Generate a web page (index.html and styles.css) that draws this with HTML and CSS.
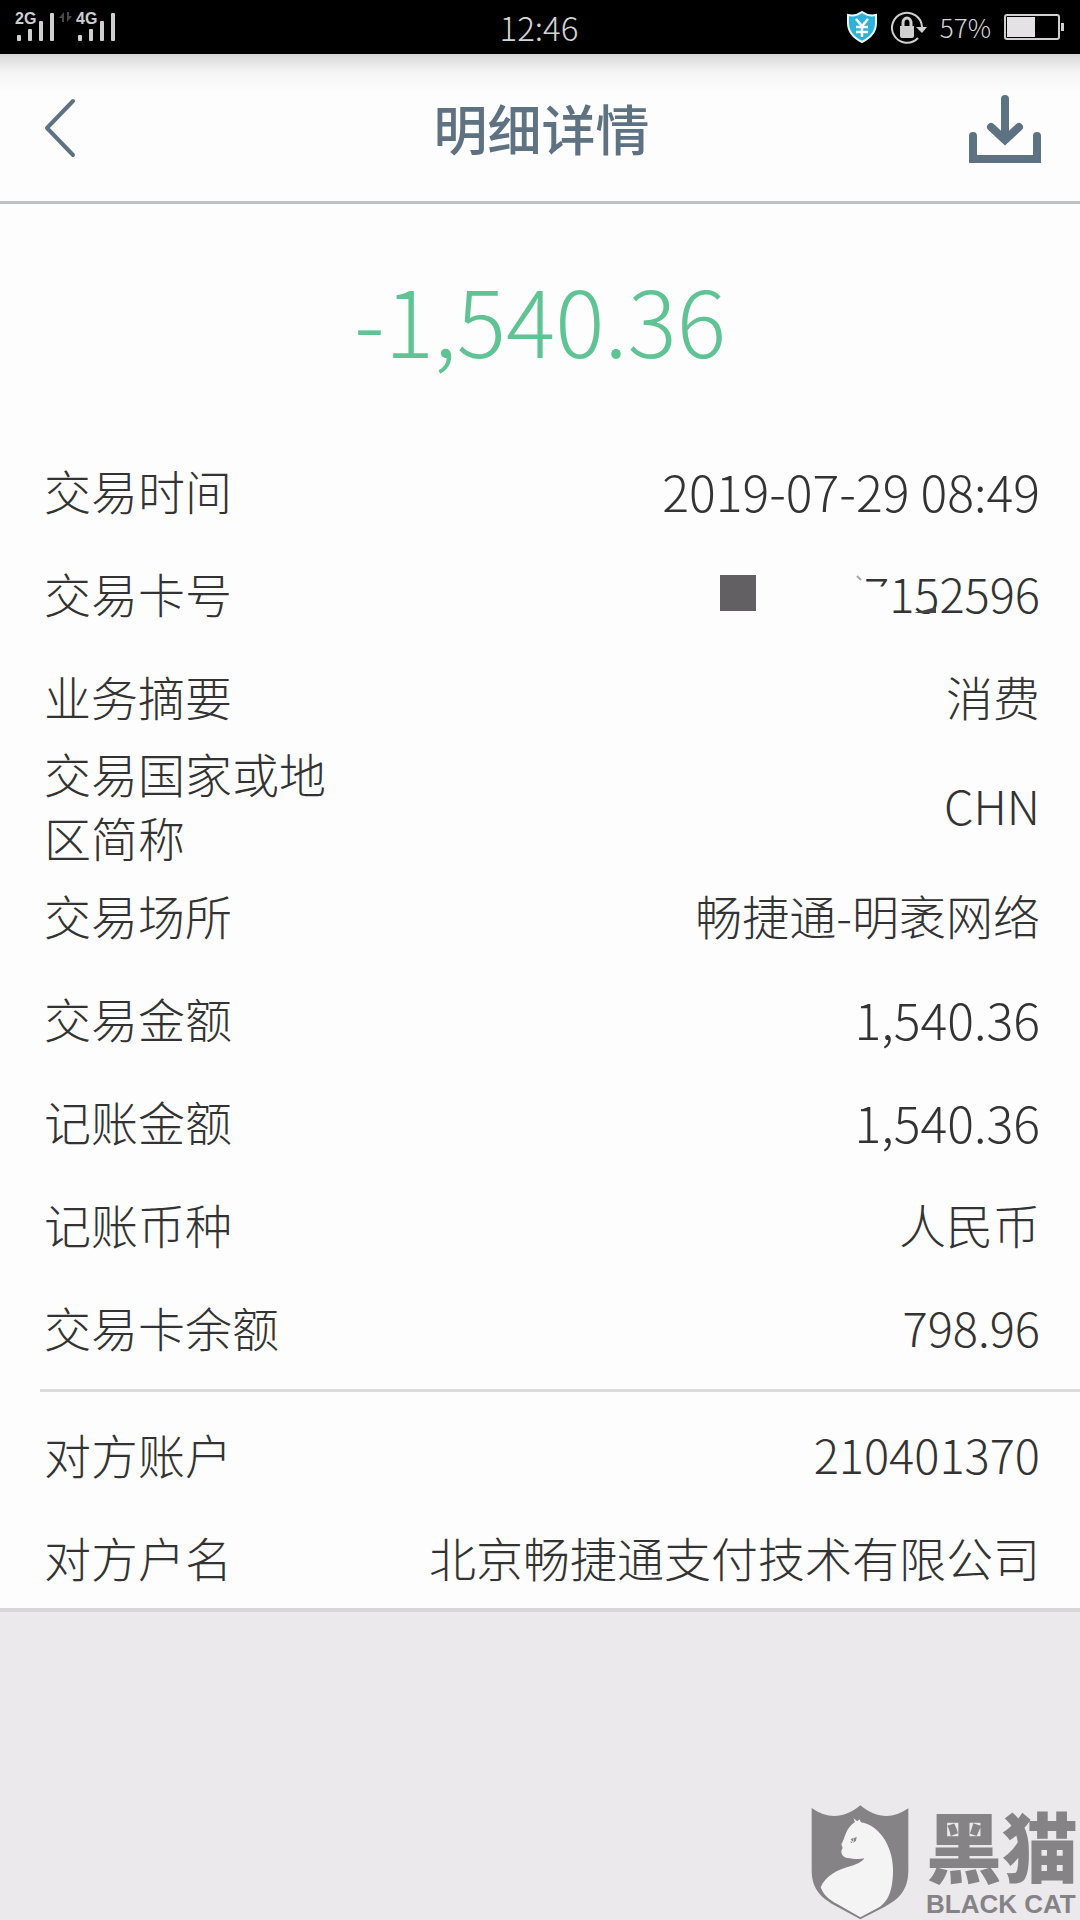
FILE: index.html
```html
<!DOCTYPE html>
<html lang="zh-CN">
<head>
<meta charset="utf-8">
<meta name="viewport" content="width=device-width, initial-scale=1">
<title>明细详情</title>
<link rel="stylesheet" href="styles.css">
</head>
<body>
<div class="status">
  <svg class="signal" width="104" height="32" viewBox="14 11 104 32" role="img" aria-label="2G 4G">
    <g fill="#cfcfcf">
      <text x="15" y="24">2G</text>
      <text x="76" y="24">4G</text>
      <rect x="17" y="35" width="4" height="6" rx="1"/><rect x="28" y="29" width="4" height="12" rx="1"/><rect x="39" y="21" width="4" height="20" rx="1"/><rect x="50" y="13" width="4" height="28" rx="1"/>
      <rect x="78" y="35" width="4" height="6" rx="1"/><rect x="89" y="29" width="4" height="12" rx="1"/><rect x="100" y="21" width="4" height="20" rx="1"/><rect x="111" y="13" width="4" height="28" rx="1"/>
    </g>
    <path fill="#484848" d="M64 12v10h-2v-4h-3zM67 12v10l5-6h-3v-4z"/>
  </svg>
  <time class="clock">12:46</time>
  <div class="status-right">
    <svg width="32" height="34" viewBox="0 0 32 34" aria-hidden="true">
      <path fill="#2fb2d8" stroke="#e6f8fc" stroke-width="2" d="M16 2c4 3 9 4 14 3v8c0 9-6 15-14 19C8 28 2 22 2 13V5c5 1 10 0 14-3z"/>
      <path fill="none" stroke="#fff" stroke-width="2.5" d="M10 9l6 7 6-7M10 17h12M10 22h12M16 16v11"/>
    </svg>
    <svg width="36" height="34" viewBox="0 0 36 34" aria-hidden="true">
      <path fill="none" stroke="#cfcfcf" stroke-width="2" d="M27 28A15 15 0 1 1 31 17"/>
      <path fill="#cfcfcf" d="M25 17h11l-5 6zM9 16h14v10a2 2 0 0 1-2 2H11a2 2 0 0 1-2-2z"/>
      <path fill="none" stroke="#cfcfcf" stroke-width="3" d="M12 17v-4a4 5 0 0 1 8 0v4"/>
    </svg>
    <span class="percent">57%</span>
    <svg width="60" height="26" viewBox="0 0 60 26" aria-hidden="true">
      <rect x="1" y="1" width="54" height="24" rx="2" fill="none" stroke="#cfcfcf" stroke-width="2"/>
      <rect x="3" y="3" width="28" height="20" fill="#e4e2e4"/>
      <rect x="57" y="9" width="3" height="8" fill="#cfcfcf"/>
    </svg>
  </div>
</div>

<header class="header">
  <button class="icon-button" type="button" aria-label="返回">
    <svg width="34" height="60" viewBox="0 0 34 60"><path d="M31 3L5 30l26 27" fill="none" stroke="currentColor" stroke-width="4" stroke-linecap="round" stroke-linejoin="round"/></svg>
  </button>
  <h1>明细详情</h1>
  <button class="icon-button" type="button" aria-label="下载">
    <svg width="72" height="70" viewBox="0 0 72 70" fill="none" stroke="currentColor" stroke-linecap="round"><path stroke-width="8" d="M36 6v40"/><path stroke-width="8" d="M22 34l14 13 14-13"/><path stroke-width="8" stroke-linecap="butt" d="M4 43v23h64V43"/><path stroke-width="8" d="M4 43v8M68 43v8"/></svg>
  </button>
</header>

<main class="sheet">
  <p class="amount">-1,540.36</p>
  <dl class="group">
    <div class="row"><dt>交易时间</dt><dd class="number">2019-07-29 08:49</dd></div>
    <div class="row"><dt>交易卡号</dt><dd class="card-number"><span class="mask"></span><svg class="tick" width="6" height="6" viewBox="0 0 6 6" aria-hidden="true"><path d="M1 1l4 4" stroke="#aaa" stroke-width="2"/></svg><span class="cut">7</span>152596<svg class="smudge" width="22" height="6" viewBox="0 0 22 6" aria-hidden="true"><path d="M22 0v6H0z" fill="#444"/></svg></dd></div>
    <div class="row"><dt>业务摘要</dt><dd>消费</dd></div>
    <div class="row row-tall"><dt>交易国家或地区简称</dt><dd>CHN</dd></div>
    <div class="row"><dt>交易场所</dt><dd>畅捷通-明袤网络</dd></div>
    <div class="row"><dt>交易金额</dt><dd class="number">1,540.36</dd></div>
    <div class="row"><dt>记账金额</dt><dd class="number">1,540.36</dd></div>
    <div class="row"><dt>记账币种</dt><dd>人民币</dd></div>
    <div class="row"><dt>交易卡余额</dt><dd>798.96</dd></div>
  </dl>
  <dl class="group group-payee">
    <div class="row"><dt>对方账户</dt><dd>210401370</dd></div>
    <div class="row"><dt>对方户名</dt><dd>北京畅捷通支付技术有限公司</dd></div>
  </dl>
</main>

<footer class="brand">
  <svg width="98" height="115" viewBox="92 74 294 345" aria-hidden="true">
    <path fill="#858385" d="M94 83c48 34 98 32 146-8 48 40 98 42 144 9v184c0 64-30 88-72 112l-72 37-72-39c-44-24-74-50-74-108z"/>
    <path fill="#f5f4f5" d="M219 114l12 9 6-6 5 9c52 7 96 70 96 142 0 65-16 98-46 115l-52 28-68-39c-28-15-42-28-51-51 14-34 50-53 91-64 21-6 34-13 40-23-16 4-36 1-50-1-12-1-20-11-19-22l4-8-4-11c12-19 12-49 41-67z"/>
    <path fill="#858385" d="M211 177l9-5-3 12zM221 174l8-5-2 12-8 6zM210 183l7 3-5 2z"/>
  </svg>
  <div class="brand-text">
    <span class="brand-cn">黑猫</span>
    <span class="brand-en">BLACK CAT</span>
  </div>
</footer>
</body>
</html>
```
FILE: styles.css
```css
* { box-sizing: border-box; }

body {
  margin: 0;
  min-height: 100vh;
  display: flex;
  flex-direction: column;
  background: #ebe9ec;
  color: #333;
  font-family: "Noto Sans CJK SC", sans-serif;
  font-weight: 300;
}

svg { display: block; flex: none; }

/* Status bar */
.status {
  display: grid;
  grid-template-columns: 1fr auto 1fr;
  align-items: center;
  height: 54px;
  padding: 0 16px 0 14px;
  background: #000;
  color: #d4d4d4;
}
.signal text { font: bold 16px "Liberation Sans", sans-serif; }
.clock { font-size: 33px; line-height: 50px; }
.status-right {
  display: flex;
  align-items: center;
  justify-content: flex-end;
  gap: 13px;
}
.percent { font-size: 26px; line-height: 50px; }

/* Title bar */
.header {
  display: grid;
  grid-template-columns: 1fr auto 1fr;
  align-items: center;
  height: 150px;
  padding: 0 39px 0 42px;
  border-bottom: 3px solid #bfc1c3;
  background: linear-gradient(#d8d8d8, #f4f4f4 18px, #fdfdfd 38px);
  color: #5e7282;
}
.header h1 {
  margin: 0;
  font-size: 54px;
  line-height: 80px;
  font-weight: 500;
}
.icon-button {
  padding: 0;
  border: 0;
  background: none;
  color: inherit;
}
.icon-button:last-child { justify-self: end; }

/* Transaction sheet */
.sheet {
  background: #fdfdfd;
  border-bottom: 4px solid #d6d5d7;
}
.amount {
  margin: 0;
  padding: 54px 0 60px;
  color: #5fc394;
  font-size: 92px;
  line-height: 120px;
  text-align: center;
}
.group { margin: 0; padding-bottom: 11px; }
.group-payee {
  margin-left: 40px;
  padding: 10px 0 0;
  border-top: 3px solid #dcdcdc;
}
.row {
  display: flex;
  align-items: center;
  justify-content: space-between;
  height: 103px;
  padding: 0 40px 0 44px;
  font-size: 47px;
  line-height: 64px;
}
.group-payee .row { padding-left: 4px; }
.row-tall { height: 116px; }
dt { max-width: 286px; }
dd { margin: 0; text-align: right; }
.number { font-size: 50px; }

.card-number {
  position: relative;
  display: flex;
  align-items: center;
}
.mask {
  width: 36px;
  height: 36px;
  margin-right: 100px;
  background: #626063;
}
.tick { margin: 0 2px 30px 0; }
.cut { clip-path: inset(0 0 38px 0); }
.smudge { position: absolute; right: 104px; bottom: 12px; }

/* Watermark */
.brand {
  display: flex;
  justify-content: flex-end;
  align-items: flex-end;
  gap: 17px;
  margin-top: auto;
  padding-right: 2px;
  color: #858385;
}
.brand-text {
  display: flex;
  flex-direction: column;
  gap: 6px;
}
.brand-cn { font-size: 76px; line-height: 76px; font-weight: 900; }
.brand-en { font: bold 26px/32px "Liberation Sans", sans-serif; }
```
